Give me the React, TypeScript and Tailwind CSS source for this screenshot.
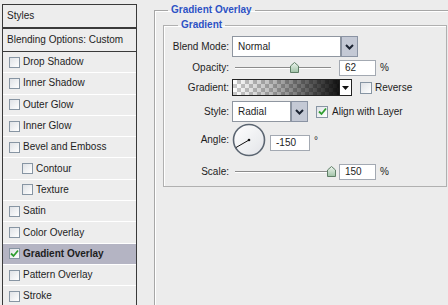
type Effect = {label: string; indent?: boolean; checked?: boolean; active?: boolean}

const effects: Effect[] = [
  {label: "Drop Shadow"},
  {label: "Inner Shadow"},
  {label: "Outer Glow"},
  {label: "Inner Glow"},
  {label: "Bevel and Emboss"},
  {label: "Contour", indent: true},
  {label: "Texture", indent: true},
  {label: "Satin"},
  {label: "Color Overlay"},
  {label: "Gradient Overlay", checked: true, active: true},
  {label: "Pattern Overlay"},
  {label: "Stroke"},
]

function Check({checked, big}: {checked?: boolean; big?: boolean}) {
  return (
    <span
      className={`${big ? "w-[12px] h-[12px]" : "w-[11px] h-[11px]"} shrink-0 flex items-center justify-center border border-[#8795a3] bg-[linear-gradient(135deg,#dfe2e6,#ffffff)]`}>
      {checked && (
        <svg width="9" height="9" viewBox="0 0 9 9">
          <path d="M1 4.5 L3.5 7 L8 1.5" fill="none" stroke="#2f9e2f" strokeWidth="1.8" />
        </svg>
      )}
    </span>
  )
}

function Chevron() {
  return (
    <svg width="9" height="6" viewBox="0 0 9 6">
      <path d="M1 1 L4.5 4.5 L8 1" fill="none" stroke="#1c2433" strokeWidth="2" />
    </svg>
  )
}

function Select({value, width}: {value: string; width: string}) {
  return (
    <div className={`${width} h-full flex`}>
      <div className="flex-1 flex items-center pl-[5px] bg-white border border-[#8f96a0]">{value}</div>
      <div className="w-[17px] flex items-center justify-center bg-[#c4c9d5] border border-[#8a93a3]">
        <Chevron />
      </div>
    </div>
  )
}

function Slider({pct}: {pct: number}) {
  return (
    <div className="relative w-[104px] h-full">
      <div className="absolute left-[3px] right-[5px] top-[7px] h-[2px] border-t border-t-[#8c8c8c] border-b border-b-white" />
      <svg className="absolute top-[2px]" style={{left: 3 + pct * 96 - 4.5}} width="9" height="11" viewBox="0 0 9 11">
        <defs>
          <linearGradient id="thumb" x1="0" y1="0" x2="0" y2="1">
            <stop offset="0" stopColor="#eef5ef" />
            <stop offset="1" stopColor="#9fc2a6" />
          </linearGradient>
        </defs>
        <polygon points="0.5,4 4.5,0.5 8.5,4 8.5,10.5 0.5,10.5" fill="url(#thumb)" stroke="#5f7f67" />
      </svg>
    </div>
  )
}

function NumBox({value, width}: {value: string; width: string}) {
  return <div className={`${width} h-[16px] flex items-center pl-[5px] bg-white border border-[#a3a9b2]`}>{value}</div>
}

function Label({children}: {children: string}) {
  return <span className="w-[65px] shrink-0 text-right mr-[3px]">{children}</span>
}

export default function App() {
  return (
    <div className="w-[448px] h-[305px] overflow-hidden bg-[#ececec] flex font-['Liberation_Sans',Arial,sans-serif] text-[10px] text-[#1d1d1d] leading-none">
      {/* Styles list */}
      <div className="ml-[2px] mt-[4px] w-[135px] h-[310px] shrink-0 flex flex-col border border-[#3a3a3a] border-b-0 bg-[#ededed]">
        <div className="h-[24px] shrink-0 flex items-center pl-[4px] border-b-2 border-[#3a3a3a]">Styles</div>
        <div className="h-[23px] shrink-0 flex items-center pl-[4px] border-b border-[#3a3a3a]">
          Blending Options: Custom
        </div>
        {effects.map((e) => (
          <div
            key={e.label}
            className={`h-[21.3px] shrink-0 flex items-center gap-[3px] border-b border-white ${
              e.indent ? "pl-[19px]" : "pl-[6px]"
            } ${e.active ? "bg-[#b4b4c3] font-bold" : ""}`}>
            <Check checked={e.checked} />
            <span>{e.label}</span>
          </div>
        ))}
      </div>

      {/* Gradient Overlay settings */}
      <fieldset className="ml-[17px] mt-[3px] w-[310px] h-[330px] shrink-0 pl-[8px] border border-[#a6a6a6] shadow-[inset_1px_1px_0_#ffffff]">
        <legend className="ml-[5px] px-[3px] leading-[14px] font-bold text-[#2d52c4]">Gradient Overlay</legend>
        <fieldset className="mt-[1px] w-[284px] flex flex-col pb-[6px] border border-[#b0b0b0] shadow-[inset_1px_1px_0_#ffffff]">
          <legend className="ml-[14px] px-[3px] leading-[14px] font-bold text-[#2d52c4]">Gradient</legend>

          <div className="mt-[4px] h-[21px] flex items-center">
            <Label>Blend Mode:</Label>
            <Select value="Normal" width="w-[126px]" />
          </div>

          <div className="mt-[3px] h-[16px] flex items-center">
            <Label>Opacity:</Label>
            <Slider pct={0.62} />
            <div className="ml-[3px]">
              <NumBox value="62" width="w-[37px]" />
            </div>
            <span className="ml-[4px]">%</span>
          </div>

          <div className="mt-[3px] h-[17px] flex items-center">
            <Label>Gradient:</Label>
            <div className="w-[108px] h-full border border-[#222222] bg-[conic-gradient(#c9c9c9_25%,#ffffff_0_50%,#c9c9c9_0_75%,#ffffff_0)] bg-[length:8px_8px]">
              <div className="w-full h-full bg-[linear-gradient(to_right,rgba(0,0,0,0),rgba(0,0,0,0.25)_35%,rgba(0,0,0,0.92))]" />
            </div>
            <div className="w-[12px] h-full flex items-center justify-center bg-white border border-l-0 border-[#222222]">
              <svg width="7" height="4" viewBox="0 0 7 4">
                <polygon points="0,0 7,0 3.5,4" fill="#111111" />
              </svg>
            </div>
            <div className="ml-[8px]">
              <Check big />
            </div>
            <span className="ml-[3px]">Reverse</span>
          </div>

          <div className="mt-[5px] h-[21px] flex items-center">
            <Label>Style:</Label>
            <Select value="Radial" width="w-[76px]" />
            <div className="ml-[8px]">
              <Check checked big />
            </div>
            <span className="ml-[4px]">Align with Layer</span>
          </div>

          <div className="mt-[1px] h-[34px] flex items-center">
            <Label>Angle:</Label>
            <svg width="34" height="34" viewBox="0 0 34 34">
              <defs>
                <linearGradient id="dial" x1="0" y1="0" x2="1" y2="1">
                  <stop offset="0" stopColor="#ffffff" />
                  <stop offset="1" stopColor="#e2e4e8" />
                </linearGradient>
              </defs>
              <circle cx="17" cy="17" r="15.5" fill="url(#dial)" stroke="#5b6571" strokeWidth="1.6" />
              <line x1="17" y1="17" x2="4" y2="24.5" stroke="#111111" strokeWidth="1" />
              <circle cx="17" cy="17" r="1.3" fill="#111111" />
            </svg>
            <div className="ml-[4px] self-start mt-[12px]">
              <NumBox value="-150" width="w-[40px]" />
            </div>
            <span className="ml-[4px] self-start mt-[13px]">°</span>
          </div>

          <div className="mt-[7px] h-[16px] flex items-center">
            <Label>Scale:</Label>
            <Slider pct={1} />
            <div className="ml-[3px]">
              <NumBox value="150" width="w-[37px]" />
            </div>
            <span className="ml-[4px]">%</span>
          </div>
        </fieldset>
      </fieldset>
    </div>
  )
}
